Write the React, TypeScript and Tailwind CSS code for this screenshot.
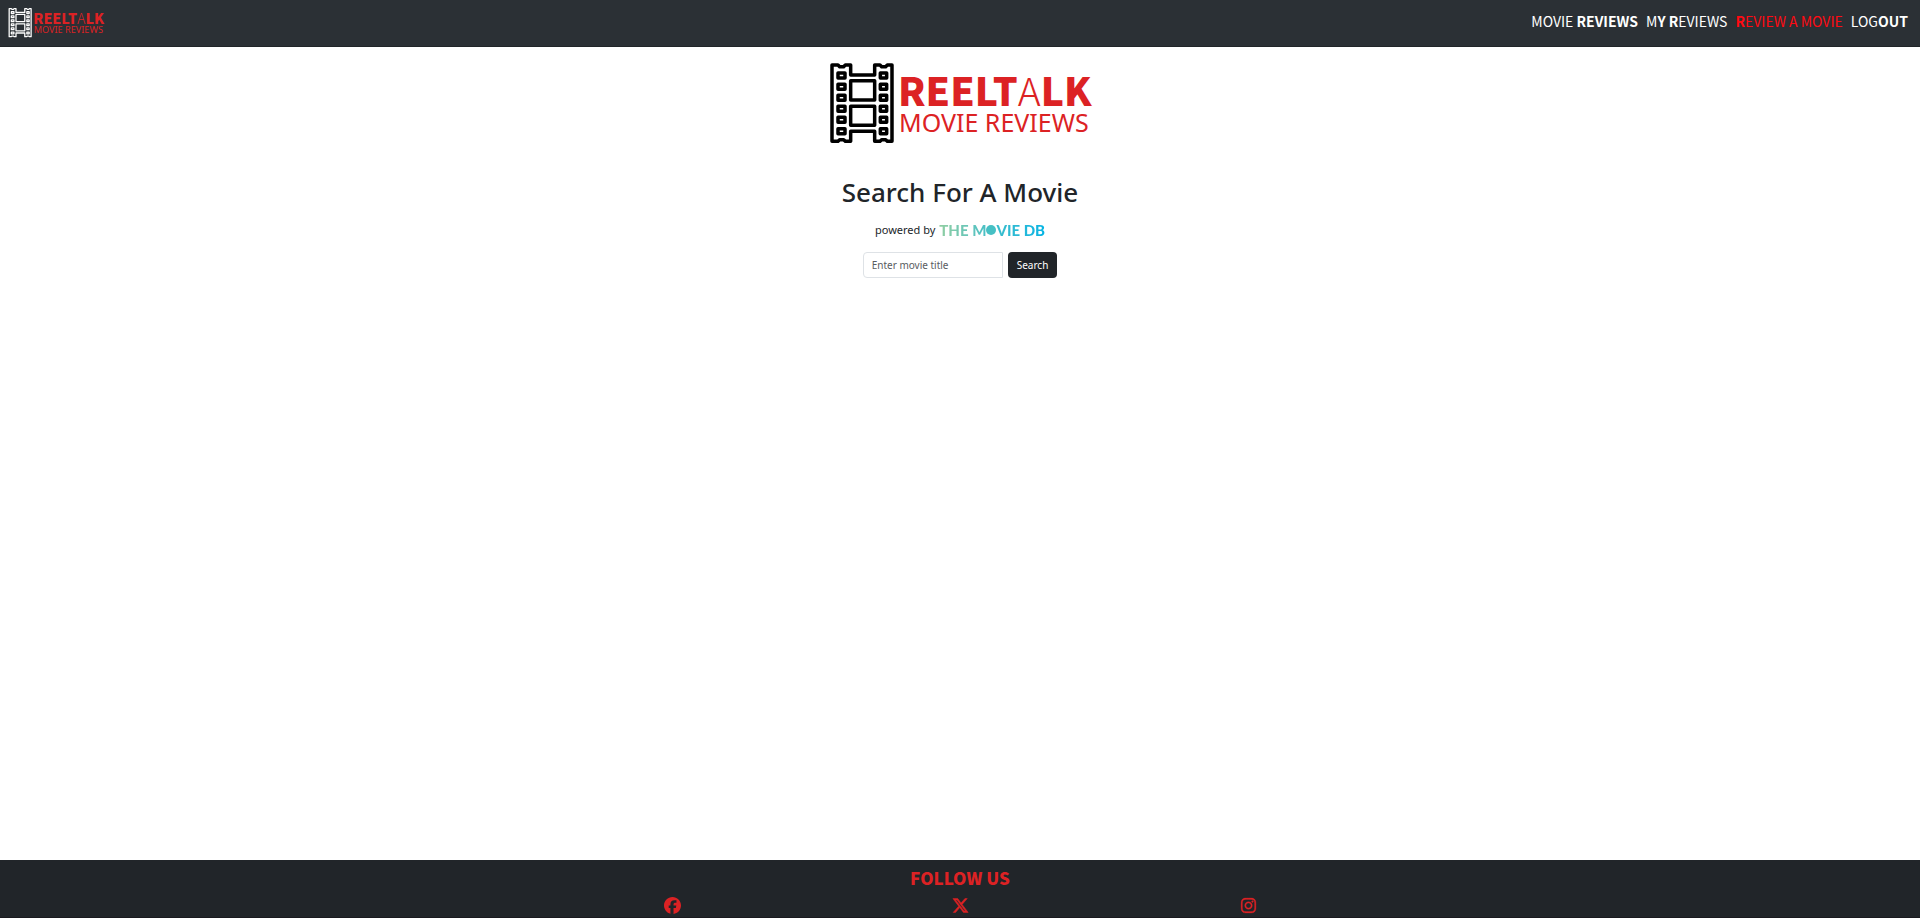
import React from "react";
import { FaFacebook, FaInstagram, FaXTwitter } from "react-icons/fa6";

const HOLE_ROWS = [54, 88, 121, 154, 187, 221];

function Logo({ className, strip }: { className: string; strip: string }) {
  return (
    <svg viewBox="0 0 262 82" className={className} role="img" aria-label="ReelTalk Movie Reviews">
      <g transform="translate(-9 -8) scale(0.3333)" fill="none" stroke={strip} strokeWidth="10.5" strokeLinejoin="round">
        <path d="M36 30H54L59 35H71L76 30H92V60H164V30H180L185 35H197L202 30H216V259H202L197 254H185L180 259H164V229H92V259H76L71 254H59L54 259H36Z" />
        <path d="M92 77H164V135H92ZM92 154H164V211H92Z" />
        {HOLE_ROWS.map((y) => (
          <path key={y} d={`M54 ${y}H75V${y + 15}H54ZM181 ${y}H200V${y + 15}H181Z`} />
        ))}
      </g>
      <g fill="#dc2224">
        <text x="69" y="43" fontSize="39" fontFamily="'Noto Sans CJK SC', sans-serif">
          <tspan fontWeight="900">REELT</tspan>
          <tspan fontWeight="300">A</tspan>
          <tspan fontWeight="900">LK</tspan>
        </text>
        <text x="70" y="69" fontSize="25" fontFamily="'Noto Sans', sans-serif">MOVIE REVIEWS</text>
      </g>
    </svg>
  );
}

const LINKS = [
  { light: "MOVIE ", bold: "REVIEWS", tail: "", color: "text-white" },
  { light: "M", bold: "Y R", tail: "EVIEWS", color: "text-white" },
  { light: "", bold: "R", tail: "EVIEW A MOVIE", color: "text-[#ff0a12]" },
  { light: "LOG", bold: "OUT", tail: "", color: "text-white" },
];

export default function App() {
  return (
    <div className="flex min-h-screen flex-col bg-white font-['Noto_Sans',sans-serif] text-[#212529]">
      <header className="flex h-[47px] items-center justify-between border-b border-[#212529] bg-[#2b3035] pr-3 pl-2">
        <a href="#home">
          <Logo className="h-[30px] w-24 overflow-visible" strip="#ffffff" />
        </a>
        <nav className="flex gap-2 pb-1 font-['Noto_Sans_CJK_SC',sans-serif] text-sm leading-5">
          {LINKS.map((l) => (
            <a key={l.light + l.bold + l.tail} href="#page" className={l.color}>
              {l.light}
              <b>{l.bold}</b>
              {l.tail}
            </a>
          ))}
        </nav>
      </header>

      <main className="flex grow flex-col items-center pt-4">
        <Logo className="h-[82px] w-[262px] overflow-visible" strip="#000000" />
        <h1 className="mt-[27px] text-[26px] leading-10 font-medium">Search For A Movie</h1>
        <p className="mt-2 flex items-center gap-1 text-[11px] leading-5">
          powered by
          <a
            href="#tmdb"
            className="flex items-center bg-linear-to-r from-[#90cea1] via-[#3cbec9] to-[#01b4e4] bg-clip-text font-['Lato',sans-serif] text-[15px] font-black text-transparent"
          >
            THE M
            <span className="size-2.5 rounded-full bg-[#46c0c4]" />
            VIE DB
          </a>
        </p>
        <form className="mt-3 flex gap-[5px]" onSubmit={(e) => e.preventDefault()}>
          <input
            type="text"
            aria-label="Movie title"
            placeholder="Enter movie title"
            className="h-[26px] w-[140px] rounded-l border border-[#dee2e6] px-2 text-[10px] placeholder:text-[#595c5f]"
          />
          <button type="submit" className="h-[26px] rounded bg-[#212529] px-[9px] text-[10px] text-white">
            Search
          </button>
        </form>
      </main>

      <footer className="flex h-[58px] flex-col items-center border-b border-[#1a1a1f] bg-[#212529] pt-2 text-[#dc2224]">
        <h2 className="font-['Noto_Sans_CJK_SC',sans-serif] text-[17px] leading-5 font-black">FOLLOW US</h2>
        <div className="mt-[9px] grid w-[45%] grid-cols-3 justify-items-center text-[17px]">
          <a href="#facebook" aria-label="Facebook"><FaFacebook /></a>
          <a href="#x" aria-label="X"><FaXTwitter strokeWidth={16} /></a>
          <a href="#instagram" aria-label="Instagram"><FaInstagram strokeWidth={10} /></a>
        </div>
      </footer>
    </div>
  );
}
